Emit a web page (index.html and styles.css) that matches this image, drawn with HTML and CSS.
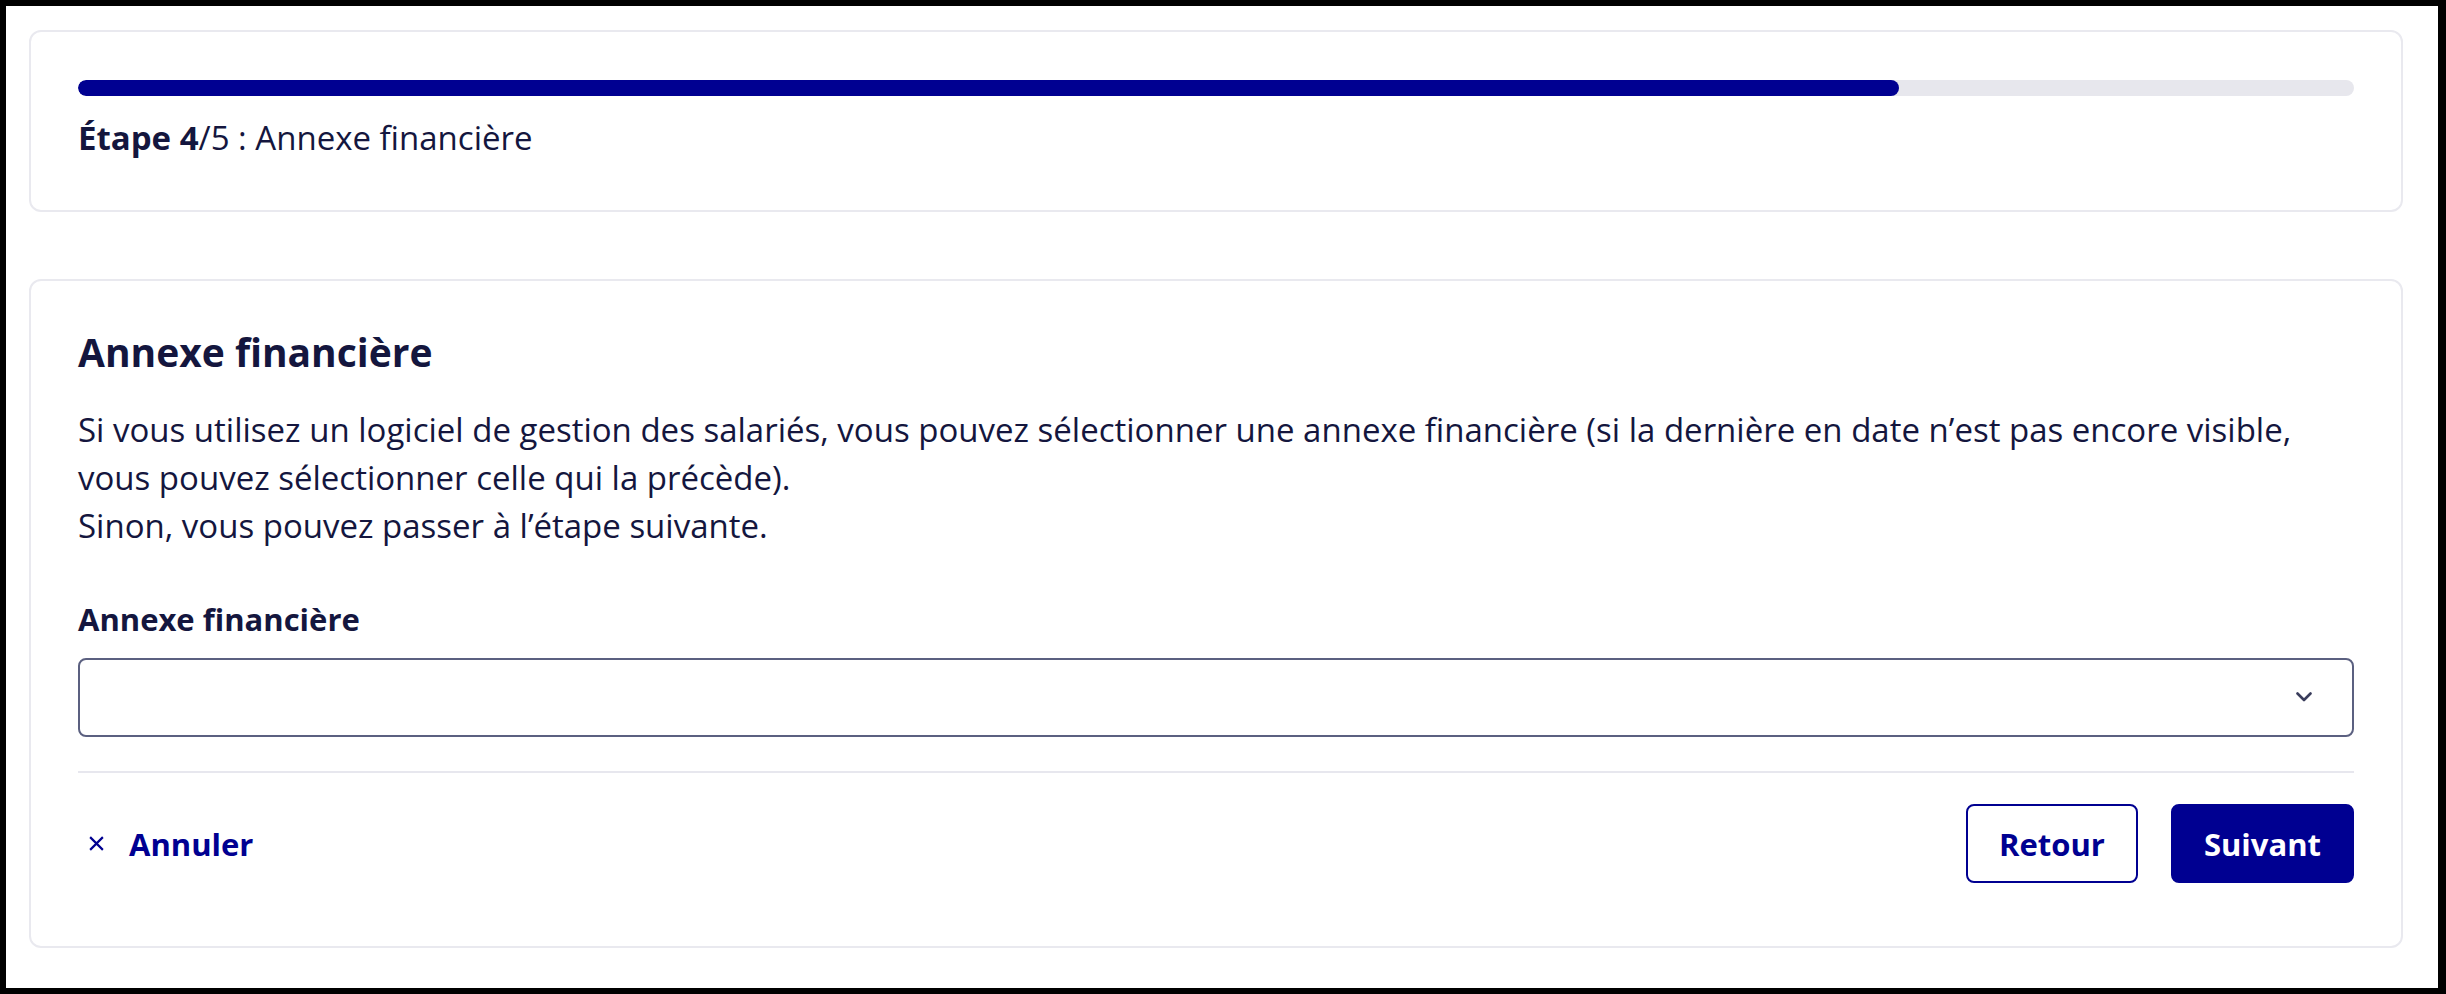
FILE: index.html
```html
<!DOCTYPE html>
<html lang="fr">
<head>
<meta charset="utf-8">
<title>Annexe financière</title>
<link rel="stylesheet" href="styles.css">
</head>
<body>
<main class="page">
  <section class="card stepper">
    <div class="progress"><div class="progress-fill" style="width:80%"></div></div>
    <p class="step-label"><strong>Étape 4</strong>/5 : Annexe financière</p>
  </section>

  <section class="card form-card">
    <h2 class="title">Annexe financière</h2>
    <p class="intro">Si vous utilisez un logiciel de gestion des salariés, vous pouvez sélectionner une annexe financière (si la dernière en date n’est pas encore visible, vous pouvez sélectionner celle qui la précède).<br>Sinon, vous pouvez passer à l’étape suivante.</p>

    <div class="field">
      <label class="field-label" for="annexe">Annexe financière</label>
      <div class="select-wrap">
        <select id="annexe" class="select"><option value=""></option></select>
        <svg class="chevron" width="16" height="10" viewBox="0 0 16 10" aria-hidden="true"><path d="M1.5 1.5 L8 8 L14.5 1.5" fill="none" stroke="currentColor" stroke-width="2.6" stroke-linecap="round" stroke-linejoin="round"/></svg>
      </div>
    </div>

    <div class="actions">
      <button class="btn-cancel" type="button">
        <svg class="cancel-icon" width="17" height="17" viewBox="0 0 16 16" aria-hidden="true"><path d="M2 2 L14 14 M14 2 L2 14" fill="none" stroke="currentColor" stroke-width="2"/></svg>
        <span>Annuler</span>
      </button>
      <div class="actions-right">
        <button class="btn btn-secondary" type="button">Retour</button>
        <button class="btn btn-primary" type="button">Suivant</button>
      </div>
    </div>
  </section>
</main>
</body>
</html>
```

FILE: styles.css
```css
* {
  box-sizing: border-box;
}

html, body {
  margin: 0;
  padding: 0;
  background: #000;
}

body {
  font-family: "Open Sans", "Noto Sans", "Liberation Sans", sans-serif;
  color: #14163e;
}

.page {
  margin: 6px 8px 6px 6px;
  min-height: calc(100vh - 12px);
  background: #fff;
  padding: 24px 35px 24px 23px;
  display: flex;
  flex-direction: column;
  gap: 67px;
}

.card {
  background: #fff;
  border: 2px solid #e9e9ef;
  border-radius: 12px;
}

.stepper {
  padding: 48px 47px;
}

.progress {
  height: 16px;
  background: #e7e7ed;
  border-radius: 8px;
  overflow: hidden;
}

.progress-fill {
  height: 100%;
  background: #000091;
  border-radius: 8px;
}

.step-label {
  margin: 18px 0 0;
  font-size: 33px;
  line-height: 48px;
}

.step-label strong {
  font-weight: 700;
}

.form-card {
  padding: 47px 47px 63px;
}

.title {
  margin: 0 0 30px;
  font-size: 39px;
  line-height: 48px;
  font-weight: 700;
}

.intro {
  margin: 0 0 45px;
  font-size: 33px;
  line-height: 48px;
}

.field-label {
  display: block;
  font-size: 31px;
  line-height: 48px;
  font-weight: 700;
  margin-bottom: 15px;
}

.select-wrap {
  position: relative;
}

.select {
  display: block;
  width: 100%;
  height: 79px;
  appearance: none;
  -webkit-appearance: none;
  background: #fff;
  border: 2px solid #5b6080;
  border-radius: 8px;
  font-family: inherit;
  font-size: 32px;
  color: #14163e;
  padding: 0 60px 0 24px;
}

.chevron {
  position: absolute;
  right: 42px;
  top: 34px;
  color: #3a3d5c;
  pointer-events: none;
}

.actions {
  margin-top: 34px;
  border-top: 2px solid #e7e7ee;
  padding-top: 31px;
  display: flex;
  justify-content: space-between;
  align-items: center;
}

.btn-cancel {
  display: flex;
  align-items: center;
  gap: 24px;
  background: none;
  border: none;
  padding: 0 0 0 10px;
  font-family: inherit;
  font-size: 31px;
  font-weight: 700;
  color: #000091;
  height: 79px;
}

.cancel-icon {
  display: block;
}

.actions-right {
  display: flex;
  gap: 33px;
}

.btn {
  height: 79px;
  padding: 0 31px;
  border-radius: 8px;
  border: 2px solid #000091;
  font-family: inherit;
  font-size: 31px;
  font-weight: 700;
}

.btn-secondary {
  background: #fff;
  color: #000091;
}

.btn-primary {
  background: #000091;
  color: #fff;
}
```
